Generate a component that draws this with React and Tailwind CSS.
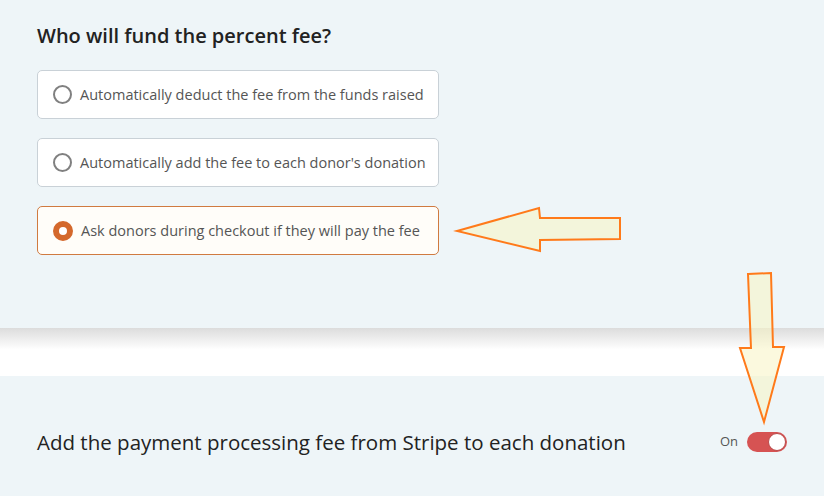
import { useState } from 'react';

const options = [
  { id: 'deduct', label: 'Automatically deduct the fee from the funds raised' },
  { id: 'add', label: "Automatically add the fee to each donor's donation" },
  { id: 'ask', label: 'Ask donors during checkout if they will pay the fee' },
];

function Radio({ checked }) {
  return checked ? (
    <span className="w-5 h-5 rounded-full border-[6px] border-[#d4682c] bg-white shrink-0" />
  ) : (
    <span className="w-[19px] h-[19px] rounded-full border-2 border-[#808080] bg-white shrink-0" />
  );
}

export default function App() {
  const [choice, setChoice] = useState('ask');
  const [stripeFee, setStripeFee] = useState(true);

  return (
    <div className="relative w-[824px] h-[496px] overflow-hidden font-['Open_Sans',sans-serif]">
      <section className="bg-[#eef5f8] h-[328px] px-[37px] pt-[22px]">
        <h2 className="text-[20px] leading-[28px] font-semibold text-[#222]">Who will fund the percent fee?</h2>
        <div className="mt-[20px] flex flex-col gap-[19px]">
          {options.map((o) => {
            const on = choice === o.id;
            return (
              <button
                key={o.id}
                onClick={() => setChoice(o.id)}
                className={
                  on
                    ? 'w-[402px] h-[49px] flex items-center gap-2 pl-[15px] rounded-[5px] border border-[#d07a40] bg-[#fffdf9] text-left'
                    : 'w-[402px] h-[49px] flex items-center gap-2 pl-[15px] rounded-[5px] border border-[#c9d1d7] bg-white text-left'
                }
              >
                <Radio checked={on} />
                <span className="text-[14.5px] text-[#555]">{o.label}</span>
              </button>
            );
          })}
        </div>
      </section>

      <div className="h-[48px] bg-[linear-gradient(to_bottom,#dcdcdc,#ffffff_45%,#ffffff)]" />

      <section className="bg-[#eef5f8] h-[132px] pl-[37px] pr-[37px] flex items-center justify-between">
        <p className="text-[20.5px] text-[#222]">Add the payment processing fee from Stripe to each donation</p>
        <div className="flex items-center gap-[9px]">
          <span className="text-[13px] text-[#555]">{stripeFee ? 'On' : 'Off'}</span>
          <button
            onClick={() => setStripeFee(!stripeFee)}
            className={
              stripeFee
                ? 'w-10 h-5 rounded-full bg-[#d65353] flex items-center justify-end px-[1px]'
                : 'w-10 h-5 rounded-full bg-[#bbb] flex items-center justify-start px-[1px]'
            }
          >
            <span className="w-[18px] h-[18px] rounded-full bg-white border border-[#b94a4a]" />
          </button>
        </div>
      </section>

      {/* annotation arrows */}
      <svg className="absolute inset-0 pointer-events-none" width="824" height="496" viewBox="0 0 824 496">
        <polygon
          points="457,231 539,208 540,218 620,218 620,239 540,240 540,251"
          fill="rgba(248,244,195,0.55)"
          stroke="#ff7a1a"
          strokeWidth="2"
        />
        <polygon
          points="748,274 771,273 773,347 784,347 764,422 740,348 751,348"
          fill="rgba(248,244,195,0.55)"
          stroke="#ff7a1a"
          strokeWidth="2"
        />
      </svg>
    </div>
  );
}
